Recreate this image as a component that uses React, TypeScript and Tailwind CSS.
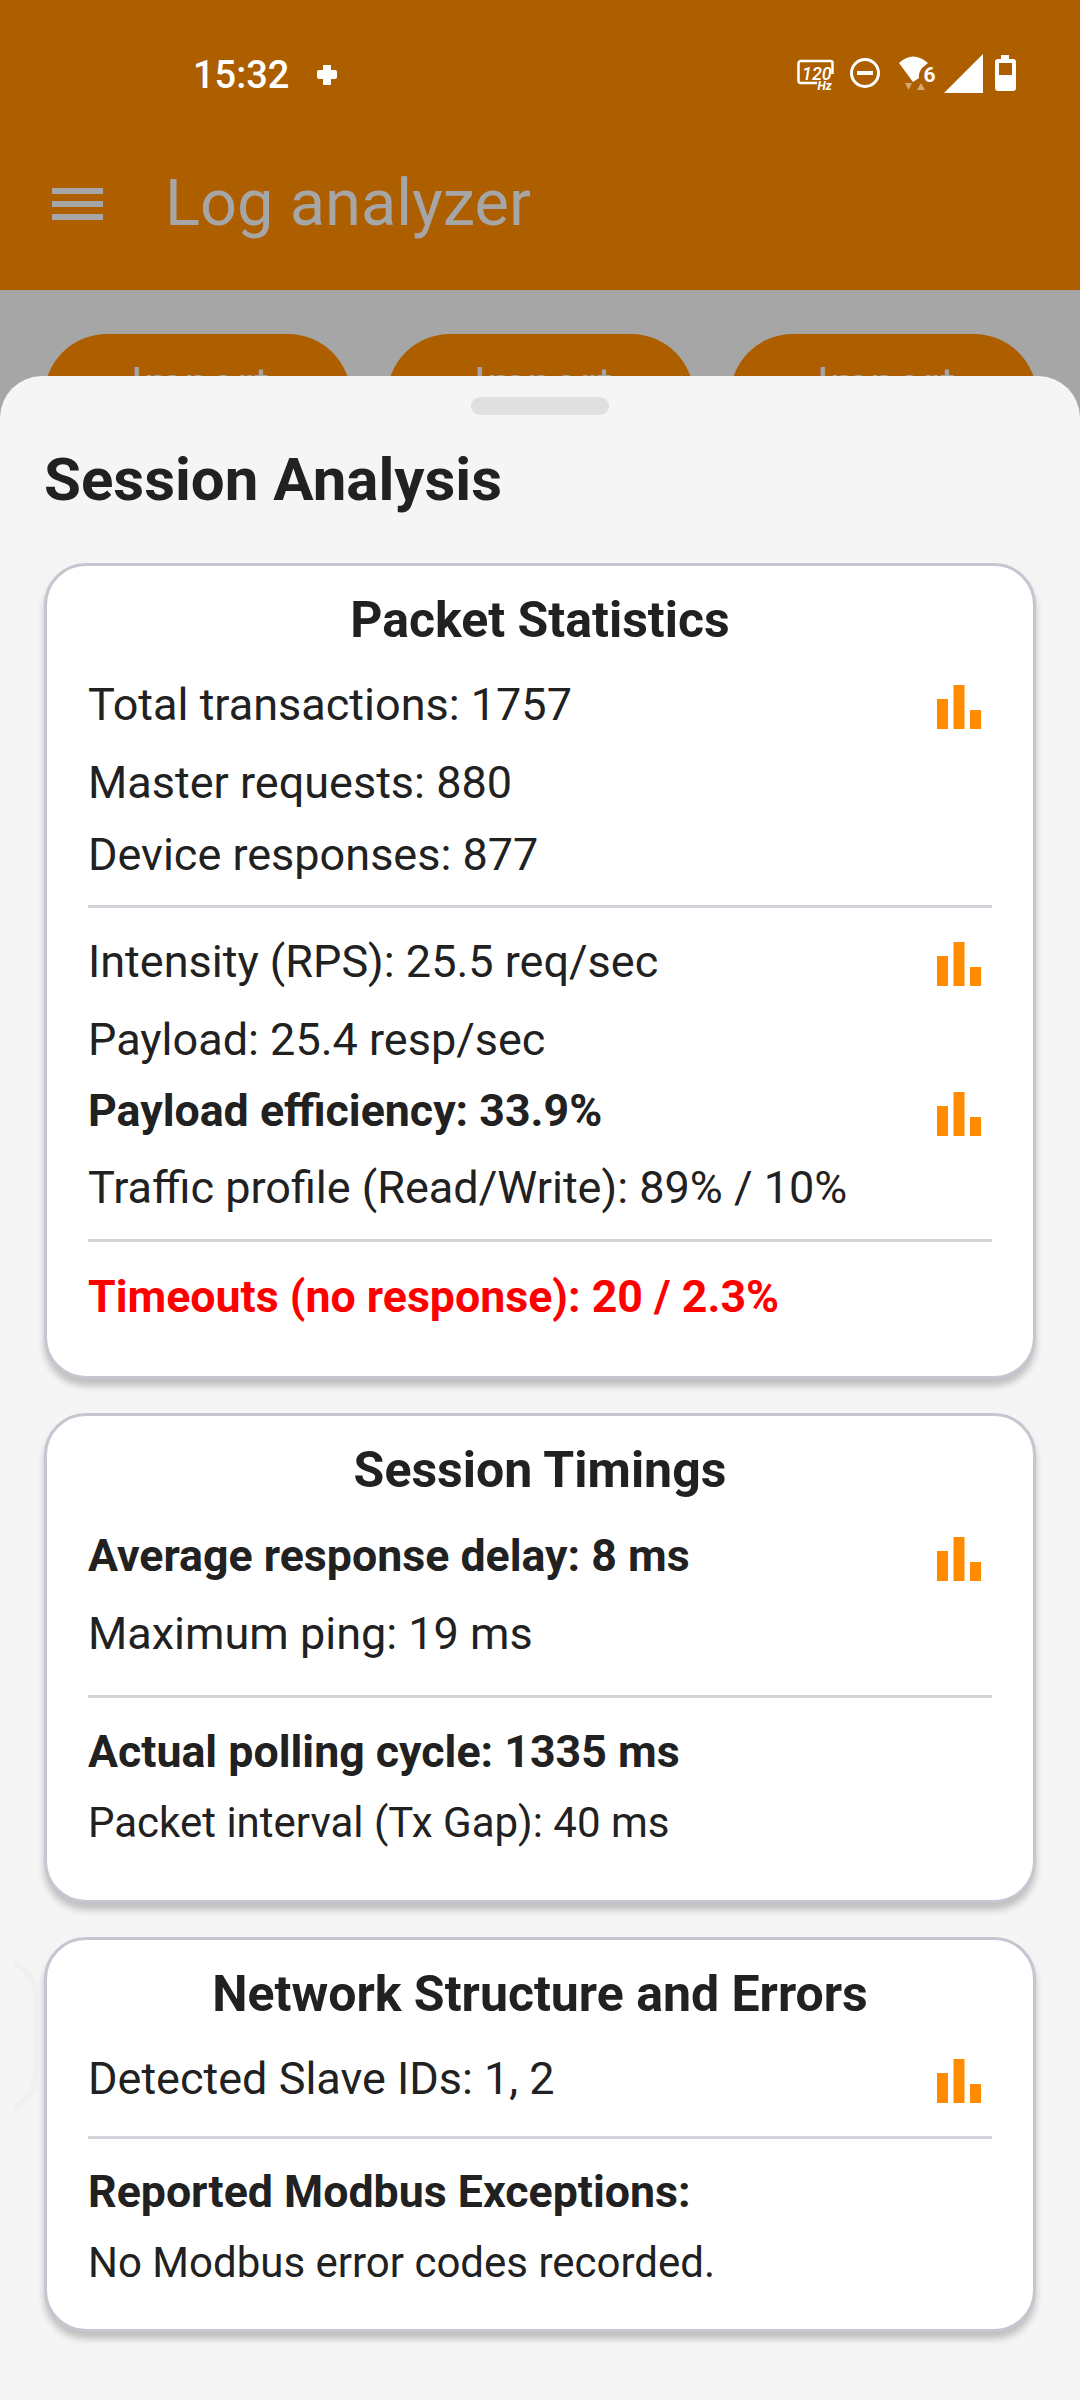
const roboto = "font-['Roboto',sans-serif]";

function BarsIcon() {
  return (
    <svg width="44" height="44" viewBox="0 0 44 44" className="mr-[11px] mt-[3px] shrink-0" fill="#ff8c00">
      <rect x="0" y="14" width="11" height="30" />
      <rect x="16.5" y="0" width="11" height="44" />
      <rect x="33" y="25" width="11" height="19" />
    </svg>
  );
}

function StatusIcons() {
  return (
    <svg width="224" height="44" viewBox="0 0 224 44" fill="#fff">
      {/* 120Hz */}
      <path d="M20 32H4a2.5 2.5 0 0 1-2.5-2.5V12.500A2.500 2.500 0 0 1 4 10H33.500A2 2 0 0 1 35.500 12V23" fill="none" stroke="#fff" strokeWidth="2.500" />
      <text x="5" y="28.500" fontFamily="Roboto" fontStyle="italic" fontSize="18" fontWeight="500">120</text>
      <text x="20.500" y="39" fontFamily="Roboto" fontStyle="italic" fontSize="12" fontWeight="700">Hz</text>
      {/* dnd */}
      <circle cx="68" cy="22" r="13.500" fill="none" stroke="#fff" strokeWidth="3" />
      <rect x="60" y="20" width="16" height="4" />
      {/* wifi 6 */}
      <path d="M102 12Q116-1 131 12L125 17Q121 22 122 27L116 31Z" />
      <text x="126.500" y="31" fontFamily="Roboto" fontSize="21" fontWeight="700">6</text>
      <path d="M108 32h7l-3.500 7Z" opacity="0.45" />
      <path d="M120 39h8l-4-7Z" opacity="0.45" />
      {/* signal */}
      <path d="M147 42L186 3V42Z" />
      {/* battery */}
      <path d="M204 4h8v4h4a3 3 0 0 1 3 3v26a3 3 0 0 1-3 3h-15a3 3 0 0 1-3-3V11a3 3 0 0 1 3-3h3Z" />
      <rect x="202" y="12" width="13" height="12" fill="#ad5f00" />
    </svg>
  );
}

function ImportButton() {
  return (
    <div className="w-[307px] h-[126px] shrink-0 rounded-[63px] bg-[#ad5f00] pt-[25px] pl-[6px] text-center text-[45px] leading-[50px] tracking-[1px] text-[#a6a6a6]">
      Import
    </div>
  );
}

function Divider({ className }: { className: string }) {
  return <div className={`h-[3px] bg-[#d6d2da] ${className}`} />;
}

function Line({ text, bold, icon, red, small, className }: { text: string; bold?: boolean; icon?: boolean; red?: boolean; small?: boolean; className: string }) {
  return (
    <div className={`flex items-center justify-between ${small ? "text-[42px]" : bold ? "text-[44.7px]" : "text-[45px]"} ${icon ? "h-[72px]" : "h-[60px]"} ${bold ? "font-bold" : ""} ${red ? "text-[#ff0000]" : "text-[#212121]"} ${className}`}>
      <span>{text}</span>
      {icon && <BarsIcon />}
    </div>
  );
}

function Card({ title, className, children }: { title: string; className: string; children: React.ReactNode }) {
  return (
    <div className={`bg-white border-[3px] border-[#cac4d0] rounded-[42px] px-[41px] shadow-[0_7px_7px_rgba(0,0,0,0.22)] ${className}`}>
      <div className="h-[60px] text-center text-[50px] leading-[60px] font-bold text-[#212121]">{title}</div>
      {children}
    </div>
  );
}

export default function App() {
  return (
    <div className={`relative w-[1080px] h-[2400px] overflow-hidden bg-[#a6a6a6] ${roboto}`}>
      <header className="h-[290px] bg-[#ad5f00]">
        <div className="h-[150px] flex items-center pl-[193px] pr-[59px]">
          <span className="text-[38px] font-medium text-white">15:32</span>
          <svg width="20" height="22" viewBox="0 0 20 22" className="ml-[28px]" fill="#fff">
            <path d="M6 1h8v5h4a2 2 0 0 1 2 2v5a2 2 0 0 1-2 2h-4v5a1 1 0 0 1-1 1H7a1 1 0 0 1-1-1v-5H2a2 2 0 0 1-2-2V8a2 2 0 0 1 2-2h4Z" />
          </svg>
          <div className="ml-auto mb-[4px]">
            <StatusIcons />
          </div>
        </div>
        <div className="h-[108px] flex items-center pl-[52px]">
          <div className="w-[51px] flex flex-col gap-[7px]">
            <div className="h-[6px] bg-[#a6a6a6]" />
            <div className="h-[6px] bg-[#a6a6a6]" />
            <div className="h-[6px] bg-[#a6a6a6]" />
          </div>
          <span className="ml-[62px] text-[65px] text-[#a6a6a6]">Log analyzer</span>
        </div>
      </header>

      <div className="h-[86px] overflow-hidden pt-[44px] pl-[44px] flex gap-[36px]">
        <ImportButton />
        <ImportButton />
        <ImportButton />
      </div>

      <section className="relative h-[2024px] bg-[#f5f5f5] rounded-t-[42px] pt-[21px] px-[44px]">
        <div className="w-[138px] h-[18px] rounded-[9px] bg-[#e0e0e0] mx-auto" />
        <h1 className="mt-[29px] h-[72px] text-[60px] leading-[72px] font-bold text-[#212121]">Session Analysis</h1>

        <Card title="Packet Statistics" className="mt-[47px] pt-[24px] pb-[48px]">
          <Line text="Total transactions: 1757" icon className="mt-[19px]" />
          <Line text="Master requests: 880" className="mt-[12px]" />
          <Line text="Device responses: 877" className="mt-[12px]" />
          <Divider className="mt-[20px]" />
          <Line text="Intensity (RPS): 25.5 req/sec" icon className="mt-[18px]" />
          <Line text="Payload: 25.4 resp/sec" className="mt-[12px]" />
          <Line text="Payload efficiency: 33.9%" bold icon className="mt-[6px]" />
          <Line text="Traffic profile (Read/Write): 89% / 10%" className="mt-[10px]" />
          <Divider className="mt-[21px]" />
          <Line text="Timeouts (no response): 20 / 2.3%" bold red className="mt-[26px]" />
        </Card>

        <Card title="Session Timings" className="mt-[34px] pt-[24px] pb-[48px]">
          <Line text="Average response delay: 8 ms" bold icon className="mt-[21px]" />
          <Line text="Maximum ping: 19 ms" className="mt-[11px]" />
          <Divider className="mt-[31px]" />
          <Line text="Actual polling cycle: 1335 ms" bold className="mt-[25px]" />
          <Line text="Packet interval (Tx Gap): 40 ms" small className="mt-[9px]" />
        </Card>

        <Card title="Network Structure and Errors" className="mt-[34px] pt-[24px] pb-[37px]">
          <Line text="Detected Slave IDs: 1, 2" icon className="mt-[19px]" />
          <Divider className="mt-[21px]" />
          <Line text="Reported Modbus Exceptions:" bold className="mt-[24px]" />
          <Line text="No Modbus error codes recorded." small className="mt-[9px]" />
        </Card>

        {/* back gesture hint */}
        <svg width="30" height="150" viewBox="0 0 30 150" className="absolute left-[14px] top-[1584px]" fill="none">
          <path d="M3 4C18 14 22 24 22 40V110C22 126 18 136 3 146" stroke="#f0f0f0" strokeWidth="6" strokeLinecap="round" />
        </svg>
      </section>
    </div>
  );
}
